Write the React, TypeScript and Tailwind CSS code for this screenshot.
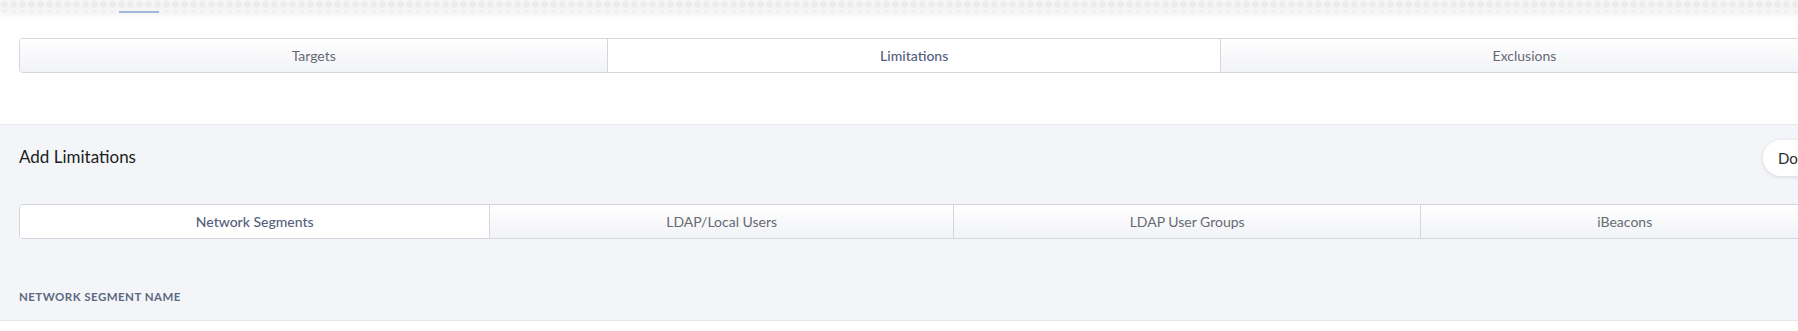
import React from "react";

const font = { fontFamily: '"Lato", "Open Sans", "Liberation Sans", sans-serif' };

function TabBar({ tabs, active }: { tabs: string[]; active: number }) {
  return (
    <div className="flex h-[35px] rounded-[4px] border border-[#d3d6dd] overflow-hidden">
      {tabs.map((t, i) => (
        <div
          key={t}
          className={
            "flex-auto flex items-center justify-center text-[14px] " +
            (i > 0 ? "border-l border-[#d3d6dd] " : "") +
            (i === active
              ? "bg-white text-[#55607c] font-medium"
              : "bg-[linear-gradient(to_bottom,#ffffff,#f2f3f7)] text-[#666a72]")
          }
        >
          {t}
        </div>
      ))}
    </div>
  );
}

export default function App() {
  return (
    <div className="w-full h-[331px] overflow-hidden bg-white" style={font}>
      <div className="w-[1848px]">
        {/* top band */}
        <div className="relative h-[12px] bg-[#f5f5f5] bg-[radial-gradient(circle,#ececec_3px,transparent_3.5px)] bg-[length:9px_9px] shadow-[0_3px_6px_rgba(0,0,0,0.06)]">
          <div className="absolute left-[119px] bottom-[-1px] w-[40px] h-[2px] bg-[#a2b7dc]" />
        </div>
        {/* white section */}
        <div className="px-[19px] pt-[26px] h-[113px] border-b border-[#e7e9ee]">
          <TabBar tabs={["Targets", "Limitations", "Exclusions"]} active={1} />
        </div>
        {/* gray section */}
        <div className="bg-[#f4f5f9] px-[19px] border-b border-[#e5e7ec]">
          <div className="flex items-center justify-between pt-[15px] h-[51px]">
            <div className="text-[17px] text-[#1b1d22] mt-[-3px]">Add Limitations</div>
            <div className="h-[36px] px-[15px] flex items-center rounded-full bg-white shadow-[0_1px_4px_rgba(0,0,0,0.12)] text-[15px] text-[#2a2c30]">
              Done
            </div>
          </div>
          <div className="pt-[28px]">
            <TabBar
              tabs={["Network Segments", "LDAP/Local Users", "LDAP User Groups", "iBeacons"]}
              active={0}
            />
          </div>
          <div className="pt-[52px] pb-[17px] text-[11.5px] font-bold tracking-[0.45px] text-[#5d6983] leading-[12px]">
            NETWORK SEGMENT NAME
          </div>
        </div>
      </div>
    </div>
  );
}
